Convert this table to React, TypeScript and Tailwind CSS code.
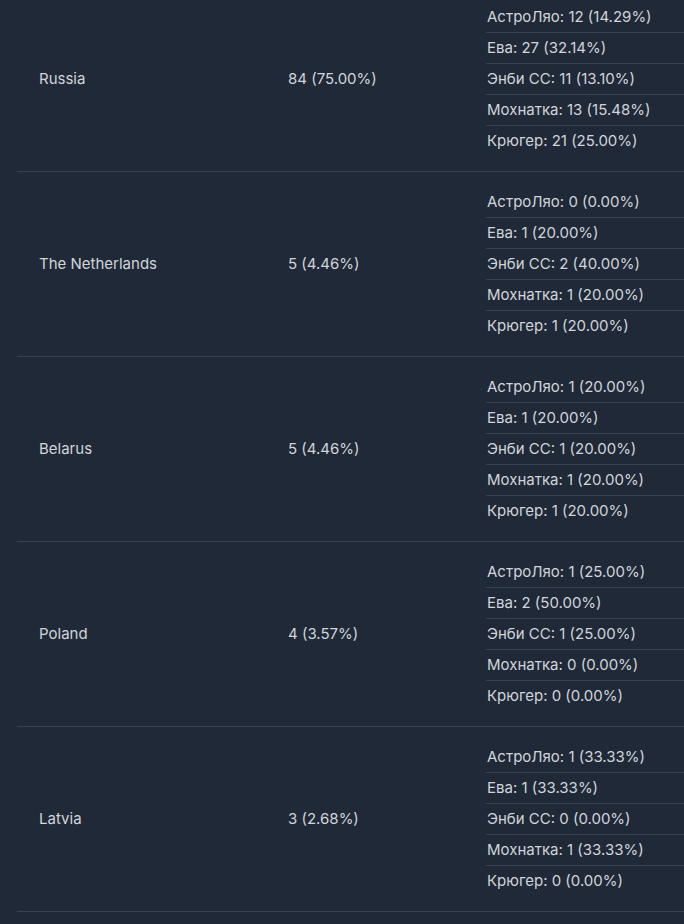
import React from "react";

type Row = { country: string; total: string; items: string[] };

const rows: Row[] = [
  {
    country: "Russia",
    total: "84 (75.00%)",
    items: [
      "АстроЛяо: 12 (14.29%)",
      "Ева: 27 (32.14%)",
      "Энби СС: 11 (13.10%)",
      "Мохнатка: 13 (15.48%)",
      "Крюгер: 21 (25.00%)",
    ],
  },
  {
    country: "The Netherlands",
    total: "5 (4.46%)",
    items: [
      "АстроЛяо: 0 (0.00%)",
      "Ева: 1 (20.00%)",
      "Энби СС: 2 (40.00%)",
      "Мохнатка: 1 (20.00%)",
      "Крюгер: 1 (20.00%)",
    ],
  },
  {
    country: "Belarus",
    total: "5 (4.46%)",
    items: [
      "АстроЛяо: 1 (20.00%)",
      "Ева: 1 (20.00%)",
      "Энби СС: 1 (20.00%)",
      "Мохнатка: 1 (20.00%)",
      "Крюгер: 1 (20.00%)",
    ],
  },
  {
    country: "Poland",
    total: "4 (3.57%)",
    items: [
      "АстроЛяо: 1 (25.00%)",
      "Ева: 2 (50.00%)",
      "Энби СС: 1 (25.00%)",
      "Мохнатка: 0 (0.00%)",
      "Крюгер: 0 (0.00%)",
    ],
  },
  {
    country: "Latvia",
    total: "3 (2.68%)",
    items: [
      "АстроЛяо: 1 (33.33%)",
      "Ева: 1 (33.33%)",
      "Энби СС: 0 (0.00%)",
      "Мохнатка: 1 (33.33%)",
      "Крюгер: 0 (0.00%)",
    ],
  },
];

export default function App() {
  return (
    <div
      className="min-h-[924px] w-full overflow-hidden bg-[#1f2937] text-[15px] text-[#d1d5db]"
      style={{ fontFamily: "Inter, 'Noto Sans', sans-serif" }}
    >
      <div className="-mt-[13px] ml-[17px] flex flex-col">
        {rows.map((r) => (
          <div key={r.country} className="flex border-b border-[#374151]">
            <div className="flex w-[249px] shrink-0 items-center pl-[22px]">
              {r.country}
            </div>
            <div className="flex w-[198px] shrink-0 items-center pl-[22px]">
              {r.total}
            </div>
            <div className="flex-1 py-[15px] pl-[22px]">
              <div className="flex flex-col">
                {r.items.map((it, i) => (
                  <div
                    key={it}
                    className={
                      "flex h-[30px] items-center pl-px leading-5" +
                      (i > 0 ? " box-content border-t border-[#374151]" : "")
                    }
                  >
                    {it}
                  </div>
                ))}
              </div>
            </div>
          </div>
        ))}
      </div>
    </div>
  );
}
